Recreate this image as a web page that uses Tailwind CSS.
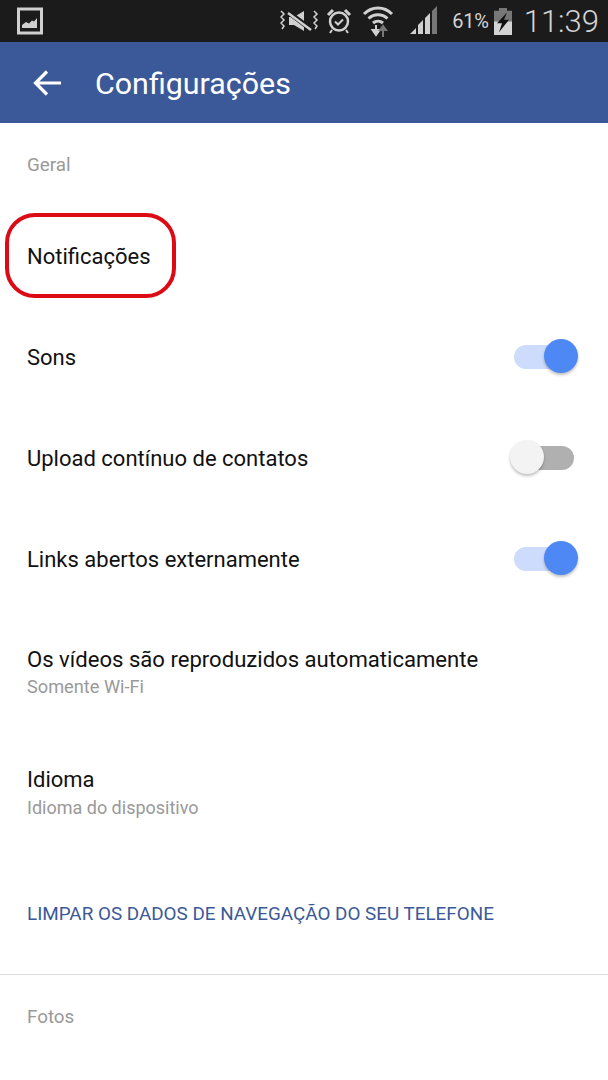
<!DOCTYPE html>
<html lang="en">
<head>
  <meta charset="UTF-8" />
  <title>Configurações</title>
  <script src="https://cdn.jsdelivr.net/npm/@tailwindcss/browser@4"></script>
</head>
<body class="relative w-[608px] h-[1080px] overflow-hidden bg-white font-['Roboto',sans-serif]">
  <!-- Status bar -->
  <div class="h-[42px] bg-[#1b1b1b] flex items-center pl-[17px] pr-[9px] text-[#d4d4d4]">
    <svg width="26" height="28" viewBox="0 0 26 28" fill="none">
      <rect x="1.5" y="2" width="23" height="24" fill="#1b1b1b" stroke="#d0d0d0" stroke-width="3"/>
      <path d="M5 21v-3l4-3 3 1.500 3-3 2 1 3-3.500V21z" fill="#d0d0d0"/>
    </svg>
    <div class="ml-auto flex items-center">
      <svg width="40" height="28" viewBox="0 0 40 28" fill="none" stroke="#d0d0d0">
        <path d="M3 5l3 3-3 3 3 3-3 3 3 3-2 3M36 5l3 3-3 3 3 3-3 3 3 3-2 3" stroke-width="1.500" transform="translate(-2 -1)"/>
        <path d="M9 10h5l10-6v20l-10-6H9z" fill="#d0d0d0" stroke="none"/>
        <path d="M8 5l24 18" stroke="#1b1b1b" stroke-width="5"/>
        <path d="M8 6l23 17" stroke-width="2.500"/>
      </svg>
      <svg class="ml-[6px]" width="26" height="28" viewBox="0 0 26 28" fill="none" stroke="#d0d0d0">
        <circle cx="13" cy="14.500" r="9" stroke-width="2.500"/>
        <path d="M9 14.500l3 3 5-5" stroke-width="2"/>
        <path d="M2 8l5-5M24 8l-5-5" stroke-width="3"/>
        <path d="M6 23l-2 3M20 23l2 3" stroke-width="2"/>
      </svg>
      <svg class="ml-[10px]" width="32" height="34" viewBox="0 0 32 34" fill="none" stroke="#d0d0d0">
        <path d="M2 10c8-8 20-8 28 0" stroke-width="3"/>
        <path d="M6.500 14.500c5.500-5 13.500-5 19 0" stroke-width="3"/>
        <path d="M11 19c3-2.500 7-2.500 10 0" stroke-width="3"/>
        <path d="M14 21v9M10.500 26l3.500 5 3.500-5z" fill="#d0d0d0" stroke-width="2"/>
        <path d="M21 33v-8M18 26l3-4 3 4z" fill="#777" stroke="#777" stroke-width="2"/>
      </svg>
      <svg class="ml-[15px]" width="30" height="30" viewBox="0 0 30 30" fill="#d0d0d0">
        <path d="M1 28l6-6v6zM9 28V19l5-5v14zM16 28V12l5-5v21z"/>
        <path d="M23 28V5l5-5v28z" fill="#777"/>
      </svg>
      <span class="ml-[13px] text-[20px] leading-none tracking-[-0.2px]">61%</span>
      <svg class="ml-[4px]" width="20" height="27" viewBox="0 0 20 30" preserveAspectRatio="none">
        <path d="M6 0h8v3h5v27H1V3h5z" fill="#777"/>
        <path d="M1 15h18v15H1z" fill="#d4d4d4"/>
        <path d="M14 5L4 17h5l-3 10 10-14h-5l3-8z" fill="#111"/>
      </svg>
      <span class="ml-[11px] text-[31px] leading-none font-light">11:39</span>
    </div>
  </div>

  <!-- Header -->
  <header class="h-[81px] bg-[#3b5998] flex items-center text-white">
    <svg class="ml-[33px]" width="29" height="28" viewBox="0 0 29 28" fill="none" stroke="white" stroke-width="3.200">
      <path d="M28 14H3M14 2.500L2.500 14 14 25.500"/>
    </svg>
    <h1 class="ml-[33px] pt-[3px] text-[30.400px] font-normal">Configurações</h1>
  </header>

  <!-- Geral -->
  <section>
    <p class="h-[83px] pl-[27px] pt-[2px] flex items-center text-[18.800px] text-[#999999]">Geral</p>
    <div class="h-[101px] px-[27px] flex items-center text-[22px] text-[#111]">Notificações</div>
    <div class="h-[101px] pl-[27px] pr-[30px] flex items-center justify-between text-[22px] text-[#111]">
      <span>Sons</span>
      <div class="relative w-[66px] h-[36px] mb-[1px] flex items-center">
        <div class="ml-[2px] w-[60px] h-[24px] rounded-full bg-[#cddcfc]"></div>
        <div class="absolute right-0 top-0 w-[34px] h-[34px] rounded-full bg-[#4d88f5] shadow-[0_2px_3px_rgba(0,0,0,0.25)]"></div>
      </div>
    </div>
    <div class="h-[101px] pl-[27px] pr-[30px] flex items-center justify-between text-[22px] text-[#111]">
      <span>Upload contínuo de contatos</span>
      <div class="relative w-[66px] h-[36px] mb-[1px] flex items-center">
        <div class="ml-[2px] w-[60px] h-[24px] rounded-full bg-[#b0b0b0]"></div>
        <div class="absolute left-[-2px] top-0 w-[34px] h-[34px] rounded-full bg-[#f3f3f3] shadow-[0_2px_3px_rgba(0,0,0,0.25)]"></div>
      </div>
    </div>
    <div class="h-[101px] pl-[27px] pr-[30px] flex items-center justify-between text-[22px] text-[#111]">
      <span>Links abertos externamente</span>
      <div class="relative w-[66px] h-[36px] mb-[1px] flex items-center">
        <div class="ml-[2px] w-[60px] h-[24px] rounded-full bg-[#cddcfc]"></div>
        <div class="absolute right-0 top-0 w-[34px] h-[34px] rounded-full bg-[#4d88f5] shadow-[0_2px_3px_rgba(0,0,0,0.25)]"></div>
      </div>
    </div>
    <div class="h-[123px] pt-[3px] px-[27px] flex flex-col justify-center">
      <p class="text-[22.100px] text-[#111] leading-[28px]">Os vídeos são reproduzidos automaticamente</p>
      <p class="text-[18.200px] text-[#999999] leading-[28px]">Somente Wi-Fi</p>
    </div>
    <div class="h-[121px] px-[27px] flex flex-col justify-center">
      <p class="text-[22px] text-[#111] leading-[28px]">Idioma</p>
      <p class="text-[18px] text-[#999999] leading-[28px]">Idioma do dispositivo</p>
    </div>
    <div class="h-[121px] pl-[27px] pt-[1px] flex items-center text-[18.850px] text-[#3b5998] border-b border-[#dddddd]">LIMPAR OS DADOS DE NAVEGAÇÃO DO SEU TELEFONE</div>
  </section>

  <!-- Fotos -->
  <p class="h-[83px] pl-[27px] pt-[2px] flex items-center text-[18.800px] text-[#999999]">Fotos</p>

  <!-- Red annotation -->
  <div class="absolute left-[5px] top-[213px] w-[171px] h-[85px] rounded-[30px] border-4 border-[#dc0a14]"></div>
</body>
</html>
